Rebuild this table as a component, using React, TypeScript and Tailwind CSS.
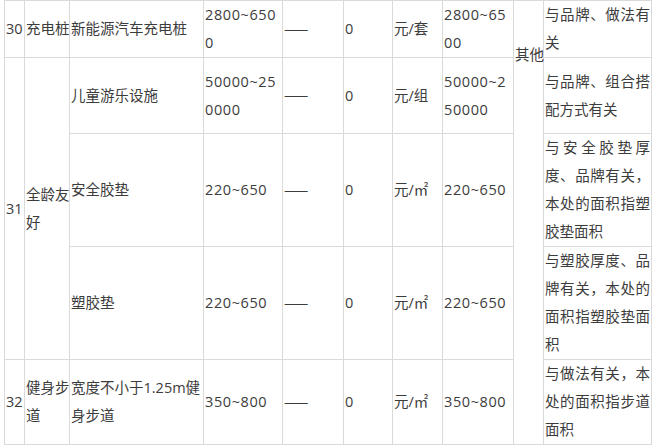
import React from 'react'

const td = 'border border-[#dadada] px-px py-0 align-middle text-left font-normal whitespace-nowrap'
const num = 'tracking-[0.6px]'
const note = 'border border-[#dadada] px-px py-0 align-middle text-justify font-normal whitespace-normal break-all'

function Dash() {
  return <span className="font-['Noto_Sans_CJK_SC',sans-serif]">——</span>
}

export default function App() {
  return (
    <div className="w-[652px] h-[446px] bg-white overflow-hidden font-['Open_Sans','Noto_Sans_CJK_SC',sans-serif] text-[14.5px] leading-[28px] text-[#3c3c3c]">
      <table className="table-fixed border-collapse ml-[4px] w-[647px]">
        <colgroup>
          <col className="w-[20px]" />
          <col className="w-[45px]" />
          <col className="w-[134px]" />
          <col className="w-[79px]" />
          <col className="w-[61px]" />
          <col className="w-[49px]" />
          <col className="w-[50px]" />
          <col className="w-[71px]" />
          <col className="w-[30px]" />
          <col className="w-[108px]" />
        </colgroup>
        <tbody>
          <tr className="h-[57px]">
            <td className={td}>30</td>
            <td className={td}>充电桩</td>
            <td className={td}>新能源汽车充电桩</td>
            <td className={`${td} ${num}`}>2800~650<br />0</td>
            <td className={td}><Dash /></td>
            <td className={td}>0</td>
            <td className={td}>元/套</td>
            <td className={`${td} ${num}`}>2800~65<br />00</td>
            <td rowSpan={5} className={`${td} !align-top pt-[40px]`}>其他</td>
            <td className={note}>与品牌、做法有关</td>
          </tr>
          <tr className="h-[76px]">
            <td rowSpan={3} className={td}>31</td>
            <td rowSpan={3} className={td}>全龄友<br />好</td>
            <td className={td}>儿童游乐设施</td>
            <td className={`${td} ${num}`}>50000~25<br />0000</td>
            <td className={td}><Dash /></td>
            <td className={td}>0</td>
            <td className={td}>元/组</td>
            <td className={`${td} ${num}`}>50000~2<br />50000</td>
            <td className={note}>与品牌、组合搭配方式有关</td>
          </tr>
          <tr className="h-[113px]">
            <td className={td}>安全胶垫</td>
            <td className={`${td} ${num}`}>220~650</td>
            <td className={td}><Dash /></td>
            <td className={td}>0</td>
            <td className={td}>元/㎡</td>
            <td className={`${td} ${num}`}>220~650</td>
            <td className={note}>与安全胶垫厚度、品牌有关，本处的面积指塑胶垫面积</td>
          </tr>
          <tr className="h-[113px]">
            <td className={td}>塑胶垫</td>
            <td className={`${td} ${num}`}>220~650</td>
            <td className={td}><Dash /></td>
            <td className={td}>0</td>
            <td className={td}>元/㎡</td>
            <td className={`${td} ${num}`}>220~650</td>
            <td className={note}>与塑胶厚度、品牌有关，本处的面积指塑胶垫面积</td>
          </tr>
          <tr className="h-[84px]">
            <td className={td}>32</td>
            <td className={td}>健身步<br />道</td>
            <td className={td}>宽度不小于1.25m健<br />身步道</td>
            <td className={`${td} ${num}`}>350~800</td>
            <td className={td}><Dash /></td>
            <td className={td}>0</td>
            <td className={td}>元/㎡</td>
            <td className={`${td} ${num}`}>350~800</td>
            <td className={note}>与做法有关，本处的面积指步道面积</td>
          </tr>
        </tbody>
      </table>
    </div>
  )
}
